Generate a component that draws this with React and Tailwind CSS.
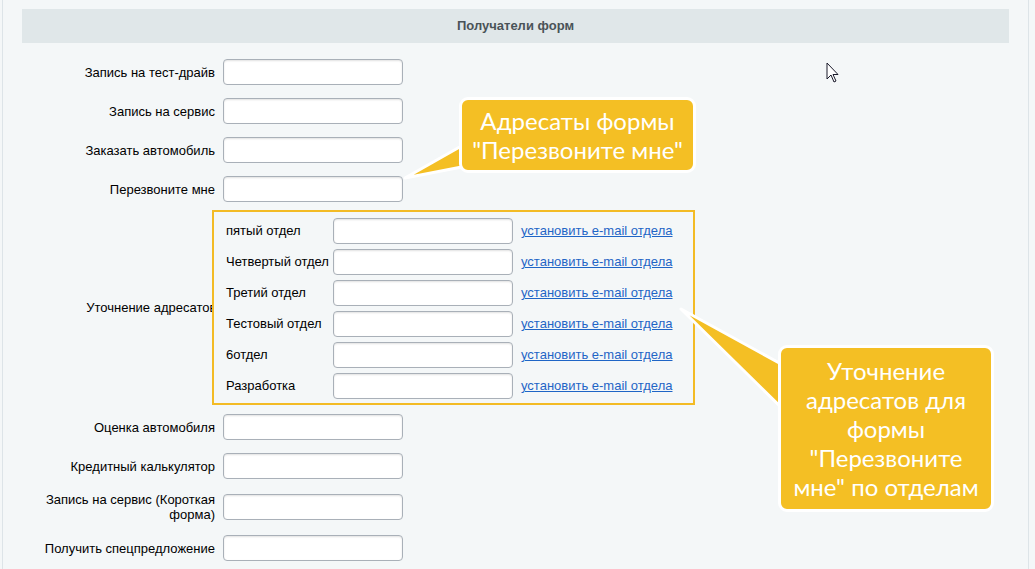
import React from "react"

const topRows = ["Запись на тест-драйв", "Запись на сервис", "Заказать автомобиль", "Перезвоните мне"]
const depts = ["пятый отдел", "Четвертый отдел", "Третий отдел", "Тестовый отдел", "6отдел", "Разработка"]
const bottomRows = ["Оценка автомобиля", "Кредитный калькулятор", "Запись на сервис (Короткая форма)", "Получить спецпредложение"]

const inputCls =
  "w-[180px] h-[26px] shrink-0 bg-white border border-[#a9b0b8] rounded-[4px] shadow-[inset_0_1px_2px_rgba(0,0,0,0.12)]"

function Row({ label, className = "" }) {
  return (
    <div className={`flex items-center ${className}`}>
      <div className="w-[193px] pl-[20px] text-right leading-[15px]">{label}</div>
      <div className={`ml-[8px] ${inputCls}`} />
    </div>
  )
}

export default function App() {
  return (
    <div
      className="relative w-full h-[569px] overflow-hidden bg-[#f4f7f8] text-[13px] text-black"
      style={{ fontFamily: '"Liberation Sans", Arial, sans-serif' }}
    >
      <div className="ml-[2px] w-[1027px] h-full border-l border-r border-[#dde4e8] pl-[19px] pt-[9px]">
        <div className="w-[987px] h-[34px] bg-[#e0e7e9] flex items-center justify-center font-bold text-[#4a5358]">
          Получатели форм
        </div>

        <div className="flex flex-col">
          {topRows.map((l, i) => (
            <Row key={l} label={l} className={i === 0 ? "mt-[16px]" : "mt-[13px]"} />
          ))}

          <div className="flex items-center mt-[8px]">
            <div className="w-[198px] pl-[20px] text-right whitespace-nowrap">Уточнение адресатов:</div>
            <div className="relative z-10 -ml-[8px] w-[483px] bg-[#f4f7f8] border-2 border-[#f3bb25] pt-[6px] pb-[4px] pl-[12px] flex flex-col gap-[5px]">
              {depts.map((d) => (
                <div key={d} className="flex items-center">
                  <div className="w-[107px] whitespace-nowrap">{d}</div>
                  <div className={inputCls} />
                  <a href="#" className="ml-[8px] text-[#1f65c6] underline">
                    установить e-mail отдела
                  </a>
                </div>
              ))}
            </div>
          </div>

          {bottomRows.map((l, i) => (
            <Row key={l} label={l} className={i === 0 ? "mt-[9px]" : "mt-[13px]"} />
          ))}
        </div>
      </div>

      {/* callout pointers */}
      <svg className="absolute left-0 top-0 pointer-events-none z-20" width="1035" height="569">
        <polygon points="405,178 472,140 472,165" fill="#f4bf24" stroke="#ffffff" strokeWidth="3" strokeLinejoin="round" />
        <polygon points="681,309 792,370 792,418" fill="#f4bf24" stroke="#ffffff" strokeWidth="3" strokeLinejoin="round" />
      </svg>

      <div
        className="absolute z-20 left-[459px] top-[97px] w-[237px] h-[76px] rounded-[9px] border-[3px] border-white bg-[#f4bf24] text-white text-[24px] leading-[29px] flex flex-col items-center justify-center text-center"
        style={{ fontFamily: 'Lato, "Open Sans", sans-serif' }}
      >
        <div>Адресаты формы</div>
        <div>"Перезвоните мне"</div>
      </div>

      <div
        className="absolute z-20 left-[778px] top-[345px] w-[216px] h-[167px] rounded-[9px] border-[3px] border-white bg-[#f4bf24] text-white text-[24px] leading-[29px] flex flex-col items-center justify-center text-center"
        style={{ fontFamily: 'Lato, "Open Sans", sans-serif' }}
      >
        <div>Уточнение</div>
        <div>адресатов для</div>
        <div>формы</div>
        <div>"Перезвоните</div>
        <div>мне" по отделам</div>
      </div>

      {/* mouse cursor */}
      <svg className="absolute z-20 left-[826px] top-[62px]" width="14" height="22" viewBox="0 0 14 22">
        <path d="M1 1 L1 17 L5 13 L8 20 L10 19 L7 12.5 L12 12.5 Z" fill="#ffffff" stroke="#1a1a2a" strokeWidth="1" strokeLinejoin="miter" />
      </svg>
    </div>
  )
}
